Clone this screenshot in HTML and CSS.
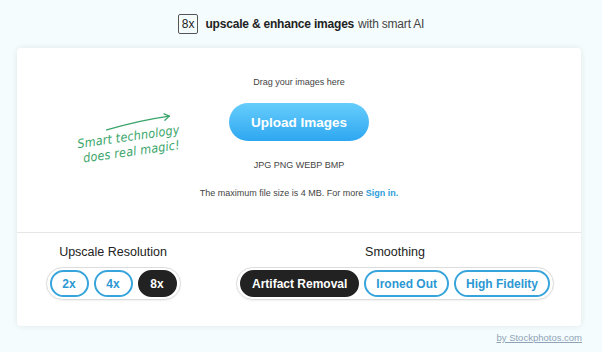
FILE: index.html
```html
<!DOCTYPE html>
<html lang="en">
<head>
    <meta charset="UTF-8">
    <title>Upscale images</title>
    <link rel="stylesheet" href="styles.css">
</head>
<body>
    <header class="top">
        <span class="badge">8x</span>
        <strong>upscale &amp; enhance images</strong>
        <span class="light">with smart AI</span>
    </header>

    <main class="card">
        <section class="upload">
            <div class="note">
                <svg class="note-arrow" width="70" height="12" viewBox="0 0 70 12">
                    <path d="M2 10 C 22 7, 44 5, 66 5" fill="none" stroke="#3aa56a" stroke-width="1.3" stroke-linecap="round"/>
                    <path d="M61 2 L66 5 L61 8.5" fill="none" stroke="#3aa56a" stroke-width="1.3" stroke-linecap="round" stroke-linejoin="round"/>
                </svg>
                <p class="note-text">Smart technology<br>&nbsp;does real magic!</p>
            </div>
            <p class="hint">Drag your images here</p>
            <button class="upload-btn">Upload Images</button>
            <p class="formats">JPG PNG WEBP BMP</p>
            <p class="limit">The maximum file size is 4 MB. For more <a href="#">Sign in.</a></p>
        </section>

        <section class="options">
            <div class="option">
                <h3>Upscale Resolution</h3>
                <div class="group">
                    <button class="pill short">2x</button>
                    <button class="pill short">4x</button>
                    <button class="pill short active">8x</button>
                </div>
            </div>
            <div class="option">
                <h3>Smoothing</h3>
                <div class="group">
                    <button class="pill active">Artifact Removal</button>
                    <button class="pill">Ironed Out</button>
                    <button class="pill">High Fidelity</button>
                </div>
            </div>
        </section>
    </main>

    <footer class="credit"><a href="#">by Stockphotos.com</a></footer>
</body>
</html>
```

FILE: styles.css
```css
body {
    margin: 0;
    background: #f5fcfd;
    font-family: "Liberation Sans", Arial, sans-serif;
    color: #222;
}
.top {
    height: 48px;
    display: flex;
    align-items: center;
    justify-content: center;
    gap: 4px;
    font-size: 12px;
    letter-spacing: -0.2px;
}
.badge {
    border: 1px solid #555;
    border-radius: 2px;
    padding: 0 3px;
    line-height: 18px;
    margin-right: 3px;
    letter-spacing: 0;
}
.top strong { font-weight: 700; }
.light { color: #444; }

.card {
    width: 564px;
    margin-left: 17px;
    background: #fff;
    border-radius: 4px;
    box-shadow: 0 0 6px rgba(0, 0, 0, 0.09);
}
.upload {
    position: relative;
    display: flex;
    flex-direction: column;
    align-items: center;
    padding: 28px 0 33px;
    border-bottom: 1px solid #e6e6e6;
}
.upload p {
    margin: 0;
    font-size: 9px;
    line-height: 12px;
    color: #444;
}
.upload-btn {
    margin-top: 15px;
    width: 140px;
    height: 38px;
    border: none;
    border-radius: 19px;
    background: linear-gradient(180deg, #66cdfb 0%, #2ea7f1 100%);
    color: #fff;
    font-family: inherit;
    font-size: 13.5px;
    font-weight: 700;
    cursor: pointer;
}
.upload .formats { margin-top: 18px; }
.upload .limit { margin-top: 16px; }
.limit a {
    color: #2d9bd8;
    font-weight: 700;
    text-decoration: none;
}

/* handwritten remark, sits over the empty left side */
.note {
    position: absolute;
    left: 60px;
    top: 69px;
    transform: rotate(-8deg);
}
.note-arrow {
    display: block;
    margin-left: 29px;
}
.upload .note-text {
    margin: 0;
    color: #3aa56a;
    font-family: "DejaVu Sans Condensed", "DejaVu Sans", sans-serif;
    font-style: italic;
    font-size: 12.5px;
    line-height: 15px;
    letter-spacing: 0.2px;
}

.options {
    display: grid;
    grid-template-columns: 192px 1fr;
    padding: 12px 0 26px;
}
.option {
    display: flex;
    flex-direction: column;
    align-items: center;
}
.option h3 {
    margin: 0 0 7px;
    font-size: 12.5px;
    line-height: 15px;
    font-weight: 400;
}
.group {
    display: flex;
    gap: 5px;
    padding: 2px 3px;
    border: 1px solid #dcdcdc;
    border-radius: 17px;
    box-shadow: 0 1px 2px rgba(0, 0, 0, 0.06);
}
.pill {
    height: 27px;
    padding: 0 10px;
    border: 2px solid #38a4dc;
    border-radius: 14px;
    background: #fff;
    color: #2b98d3;
    font-family: inherit;
    font-size: 12px;
    font-weight: 700;
    cursor: pointer;
}
.pill.short {
    min-width: 39px;
    padding: 0;
}
.pill.active {
    background: #222;
    border-color: #222;
    color: #fff;
}

.credit {
    width: 582px;
    text-align: right;
    margin-top: 6px;
    font-size: 9.5px;
}
.credit a { color: #8fa3b8; }
```
